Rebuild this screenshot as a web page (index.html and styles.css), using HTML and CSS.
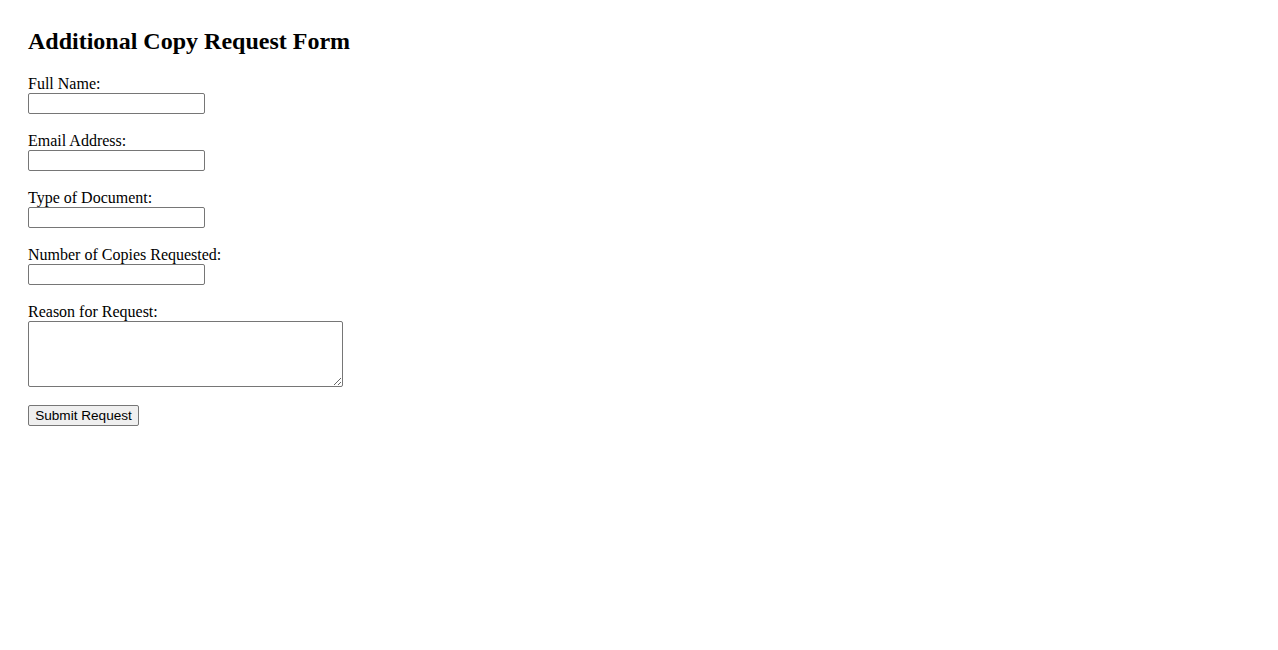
FILE: index.html
```html
<!DOCTYPE html>
<html>
<head>
<meta charset="utf-8">
<title>Additional Copy Request Form</title>
<link rel="stylesheet" href="styles.css">
</head>
<body>
<div class="page">
  <h2 class="title">Additional Copy Request Form</h2>
  <form class="form">
    <div class="field">
      <label class="label" for="name">Full Name:</label>
      <input class="input" type="text" id="name">
    </div>
    <div class="field">
      <label class="label" for="email">Email Address:</label>
      <input class="input" type="email" id="email">
    </div>
    <div class="field">
      <label class="label" for="doc">Type of Document:</label>
      <input class="input" type="text" id="doc">
    </div>
    <div class="field">
      <label class="label" for="copies">Number of Copies Requested:</label>
      <input class="input" type="number" id="copies">
    </div>
    <div class="field">
      <label class="label" for="reason">Reason for Request:</label>
      <textarea class="textarea" id="reason"></textarea>
    </div>
    <div class="actions">
      <button class="button" type="submit">Submit Request</button>
    </div>
  </form>
</div>
</body>
</html>
```
FILE: styles.css
```css
html, body {
  margin: 0;
  padding: 0;
  background: #ffffff;
}
body {
  font-family: "Liberation Serif", "Times New Roman", serif;
  font-size: 16px;
  color: #000000;
}
.page {
  padding: 28px;
}
.title {
  margin: 0 0 20px 0;
  font-size: 24px;
  font-weight: bold;
  line-height: 27px;
}
.form {
  display: flex;
  flex-direction: column;
  align-items: flex-start;
}
.field {
  display: flex;
  flex-direction: column;
  align-items: flex-start;
  margin-bottom: 18px;
}
.label {
  display: block;
  height: 18px;
  line-height: 18px;
}
.input {
  box-sizing: border-box;
  width: 177px;
  height: 21px;
  margin: 0;
  padding: 1px 2px;
  border: 1px solid #767676;
  border-radius: 2px;
  font-family: "Liberation Sans", Arial, sans-serif;
  font-size: 13.33px;
  background: #ffffff;
  -moz-appearance: textfield;
}
.input::-webkit-outer-spin-button,
.input::-webkit-inner-spin-button {
  -webkit-appearance: none;
  margin: 0;
}
.textarea {
  box-sizing: border-box;
  width: 315px;
  height: 66px;
  margin: 0;
  padding: 2px;
  border: 1px solid #767676;
  border-radius: 2px;
  font-family: "Liberation Mono", monospace;
  font-size: 13.33px;
  display: block;
}
.button {
  box-sizing: border-box;
  width: 111px;
  height: 21px;
  margin: 0;
  padding: 1px 6px;
  border: 1px solid #767676;
  border-radius: 2px;
  background: #efefef;
  font-family: "Liberation Sans", Arial, sans-serif;
  font-size: 13.6px;
  color: #000000;
  line-height: 17px;
  text-align: center;
  white-space: nowrap;
}
```
